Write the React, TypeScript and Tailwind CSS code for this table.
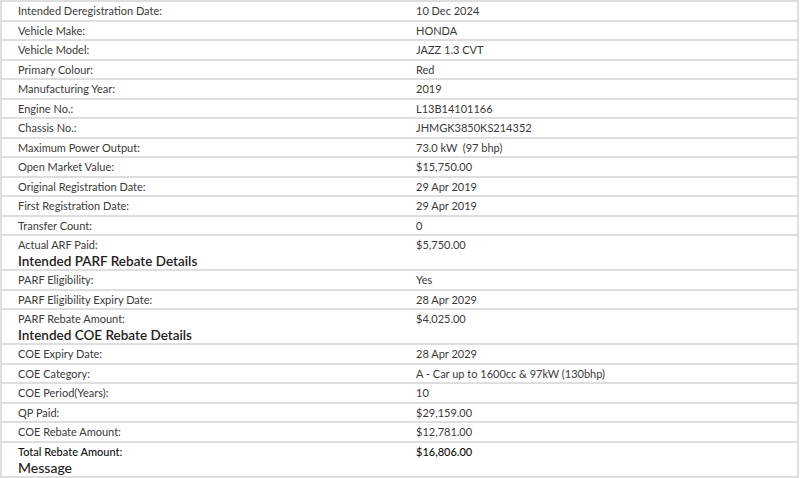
import React from "react";

type Row = { label: string; value: string; heading?: string; strong?: boolean };

const rows: Row[] = [
  { label: "Intended Deregistration Date:", value: "10 Dec 2024" },
  { label: "Vehicle Make:", value: "HONDA" },
  { label: "Vehicle Model:", value: "JAZZ 1.3 CVT" },
  { label: "Primary Colour:", value: "Red" },
  { label: "Manufacturing Year:", value: "2019" },
  { label: "Engine No.:", value: "L13B14101166" },
  { label: "Chassis No.:", value: "JHMGK3850KS214352" },
  { label: "Maximum Power Output:", value: "73.0 kW  (97 bhp)" },
  { label: "Open Market Value:", value: "$15,750.00" },
  { label: "Original Registration Date:", value: "29 Apr 2019" },
  { label: "First Registration Date:", value: "29 Apr 2019" },
  { label: "Transfer Count:", value: "0" },
  { label: "Actual ARF Paid:", value: "$5,750.00", heading: "Intended PARF Rebate Details" },
  { label: "PARF Eligibility:", value: "Yes" },
  { label: "PARF Eligibility Expiry Date:", value: "28 Apr 2029" },
  { label: "PARF Rebate Amount:", value: "$4,025.00", heading: "Intended COE Rebate Details" },
  { label: "COE Expiry Date:", value: "28 Apr 2029" },
  { label: "COE Category:", value: "A - Car up to 1600cc & 97kW (130bhp)" },
  { label: "COE Period(Years):", value: "10" },
  { label: "QP Paid:", value: "$29,159.00" },
  { label: "COE Rebate Amount:", value: "$12,781.00" },
  { label: "Total Rebate Amount:", value: "$16,806.00", heading: "Message", strong: true },
];

export default function App() {
  return (
    <div
      className="w-[799px] bg-[#dedede] p-[2px] flex flex-col gap-[2px] text-[11px] text-[#3a3a3a]"
      style={{ fontFamily: "Lato, 'Open Sans', sans-serif" }}
    >
      {rows.map((r, i) => (
        <div key={i} className={`bg-white flex ${r.heading ? "h-[33px]" : "h-[17.5px]"}`}>
          <div className="w-[398px] pl-[16px] flex flex-col">
            <div className={`leading-[17.5px] ${r.strong ? "font-medium text-[#111]" : ""}`}>{r.label}</div>
            {r.heading && (
              <div
                className={
                  r.heading === "Message"
                    ? "text-[14px] leading-[16px] font-medium text-[#222]"
                    : "text-[13.5px] leading-[14px] font-semibold text-[#222]"
                }
              >
                {r.heading}
              </div>
            )}
          </div>
          <div className={`pl-[16px] leading-[17.5px] whitespace-pre ${r.strong ? "font-medium text-[#111]" : ""}`}>
            {r.value}
          </div>
        </div>
      ))}
    </div>
  );
}
